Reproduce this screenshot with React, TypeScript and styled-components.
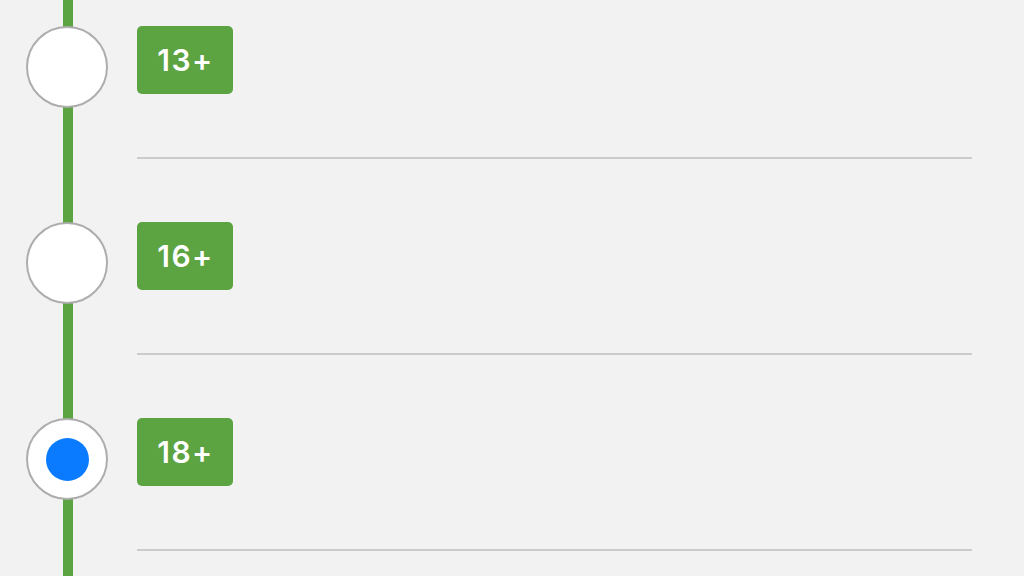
import React from 'react'
import styled, { createGlobalStyle } from 'styled-components'

const GlobalStyle = createGlobalStyle`
  html, body {
    margin: 0;
    padding: 0;
    background: #f2f2f2;
    font-family: Inter, "Liberation Sans", sans-serif;
  }
`

interface Step {
  label: string
  selected?: boolean
}

const steps: Step[] = [{ label: '13+' }, { label: '16+' }, { label: '18+', selected: true }]

export default function App() {
  return (
    <>
      <GlobalStyle />
      <Page>
        {steps.map((step) => (
          <Row key={step.label}>
            <Track>
              <Marker>{step.selected && <Dot />}</Marker>
            </Track>
            <Content>
              <AgeBadge>{step.label}</AgeBadge>
              <Divider />
            </Content>
          </Row>
        ))}
      </Page>
    </>
  )
}

const Page = styled.div`
  display: flex;
  flex-direction: column;
  width: 1024px;
  height: 576px;
  overflow: hidden;
  background: #f2f2f2;
`

const Row = styled.div`
  display: flex;
  flex: 0 0 196px;
  height: 196px;
`

const Track = styled.div`
  display: flex;
  justify-content: center;
  width: 82px;
  margin-left: 26px;
  padding-top: 26px;
  box-sizing: border-box;
  background: linear-gradient(#5ca442, #5ca442) 37px 0 / 10px 100% no-repeat;
`

const Marker = styled.div`
  display: flex;
  align-items: center;
  justify-content: center;
  width: 82px;
  height: 82px;
  box-sizing: border-box;
  border-radius: 50%;
  border: 2px solid #adadad;
  background: #ffffff;
`

const Dot = styled.div`
  width: 43px;
  height: 43px;
  border-radius: 50%;
  background: #0a7bff;
`

const Content = styled.div`
  display: flex;
  flex-direction: column;
  align-items: flex-start;
  flex: 1;
  margin-left: 29px;
  margin-right: 52px;
  padding-top: 26px;
`

const AgeBadge = styled.div`
  display: flex;
  align-items: center;
  justify-content: center;
  width: 96px;
  height: 68px;
  padding-left: 1px;
  box-sizing: border-box;
  border-radius: 5px;
  background: #5ca442;
  color: #ffffff;
  font-size: 30px;
  font-weight: 600;
  letter-spacing: 1.5px;
`

const Divider = styled.div`
  align-self: stretch;
  height: 2px;
  margin-top: 63px;
  background: #cbcbcb;
`
